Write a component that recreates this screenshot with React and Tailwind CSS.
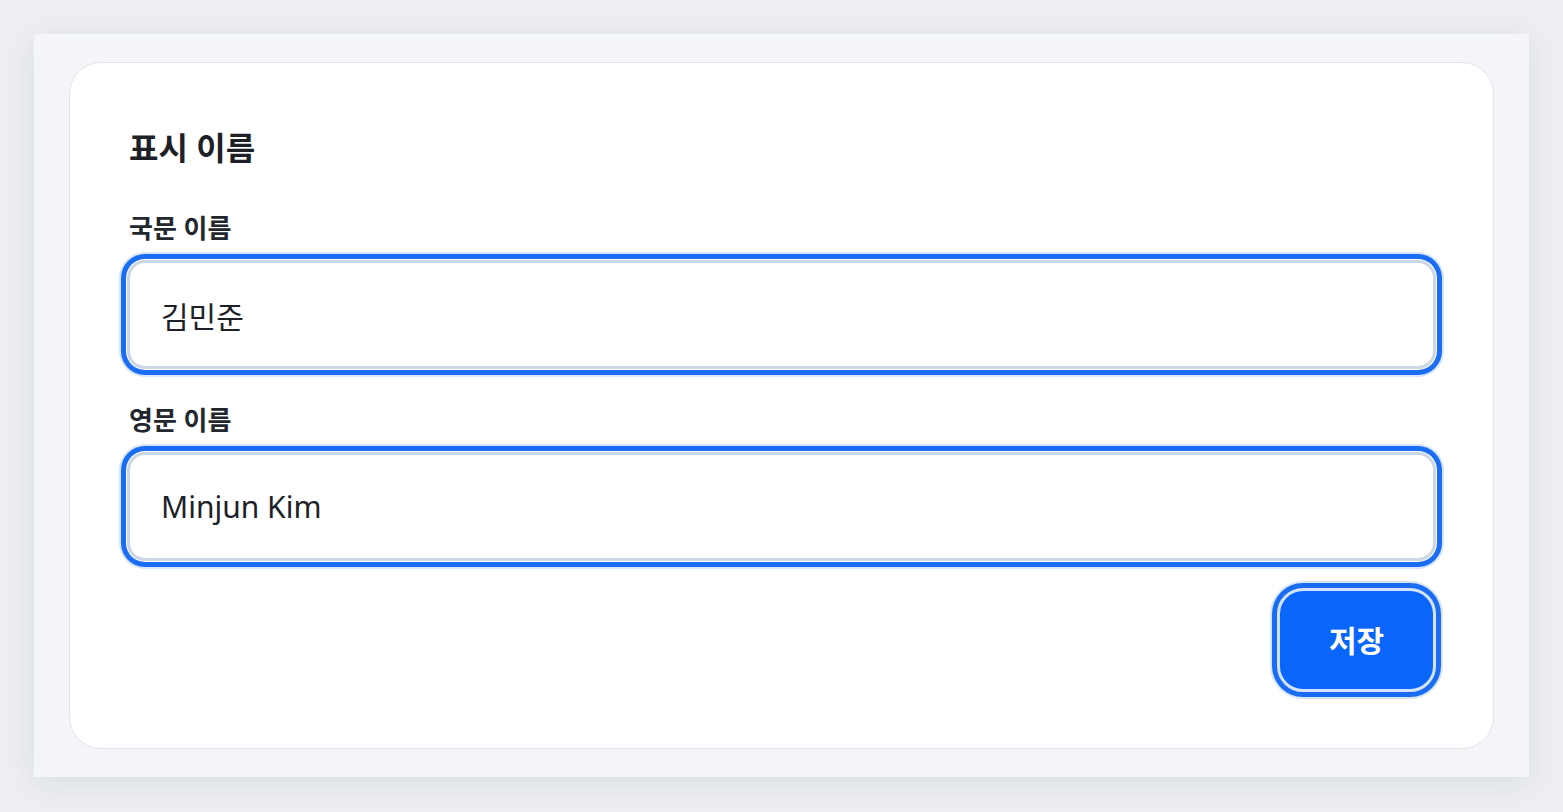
export default function App() {
  return (
    <div
      className="min-h-screen bg-[#eceef2] p-[34px]"
      style={{ fontFamily: '"Noto Sans", "Noto Sans CJK KR", sans-serif' }}
    >
      <section className="bg-[#f4f5f8] px-[35px] py-[28px] shadow-[0_6px_28px_rgba(30,40,60,0.08)]">
        <div className="rounded-[32px] border border-[#e3e5ea] bg-white px-[57px] pt-[65px] pb-[56px]">
          <h2 className="pl-[2px] text-[32px] leading-[40px] font-bold text-[#1d2127]">표시 이름</h2>

          <label className="mt-[44px] block pl-[2px] text-[26px] leading-[32px] font-bold text-[#23272e]">국문 이름</label>
          <input
            defaultValue="김민준"
            className="mt-[16px] block h-[109px] w-full rounded-[18px] border-[3px] border-[#ccd6e4] bg-white px-[31px] text-[30px] text-[#1d2127] outline-none shadow-[0_0_0_1px_#ffffff,0_0_0_6px_#1a6cf3,0_0_0_8px_#d6e5fc]"
          />

          <label className="mt-[35px] block pl-[2px] text-[26px] leading-[32px] font-bold text-[#23272e]">영문 이름</label>
          <input
            defaultValue="Minjun Kim"
            className="mt-[16px] block h-[109px] w-full rounded-[18px] border-[3px] border-[#ccd6e4] bg-white px-[31px] text-[30px] text-[#1d2127] outline-none shadow-[0_0_0_1px_#ffffff,0_0_0_6px_#1a6cf3,0_0_0_8px_#d6e5fc]"
          />

          <div className="mt-[27px] flex justify-end">
            <button className="h-[104px] w-[159px] rounded-[26px] border-[3px] border-[#d3e3fd] bg-[#0a65fb] text-[30px] font-bold text-white shadow-[0_0_0_5px_#1a6cf3,0_0_0_7px_#d6e5fc]">
              저장
            </button>
          </div>
        </div>
      </section>
    </div>
  );
}
